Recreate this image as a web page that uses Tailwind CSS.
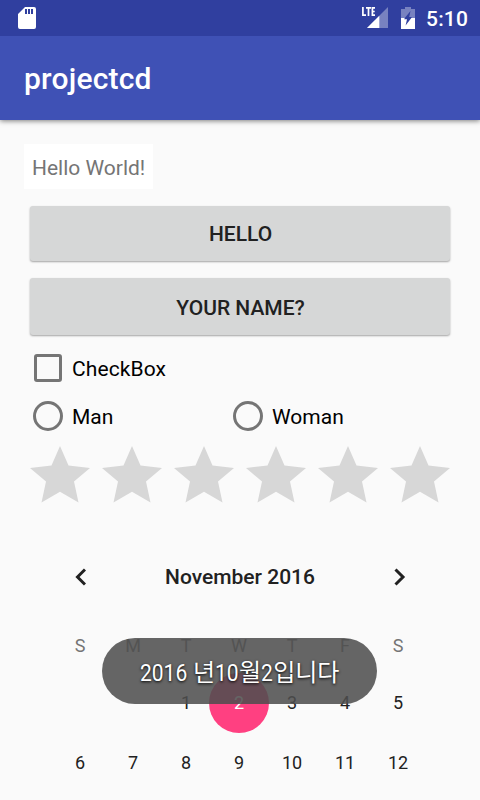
<!DOCTYPE html>
<html lang="ko">
<head>
<meta charset="utf-8">
<title>projectcd</title>
<script src="https://cdn.jsdelivr.net/npm/@tailwindcss/browser@4"></script>
</head>
<body class="relative flex h-[800px] w-[480px] flex-col overflow-hidden bg-[#fafafa] font-['Roboto','Noto_Sans_CJK_KR',sans-serif] text-[21px] text-black">
  <header class="h-[120px] shrink-0 bg-[#3f51b5] text-white shadow-[0_1px_5px_rgba(0,0,0,0.5)]">
    <div class="flex h-9 items-center bg-[#303f9f] pl-[18px] pr-3">
      <svg class="h-[22px] w-[18px]" viewBox="0 0 18 22"><path fill="#fff" fill-rule="evenodd" d="M7 0H16Q18 0 18 2V20Q18 22 16 22H2Q0 22 0 20V7ZM7 2V7H9V2ZM10 2V7H12V2ZM13 2V7H15V2Z"/></svg>
      <svg class="ml-auto h-[22px] w-[27px]" viewBox="0 0 27 22">
        <path fill="#fff" fill-opacity=".35" d="M26 0V21H5Z"/>
        <path fill="#fff" d="M17.300 8.700V21H5Z"/>
        <path fill="none" stroke="#fff" stroke-width="1.700" d="M.9 0V8.200H4M4 .9H9M6.500 .9V9M13 .9H10.400V8.200H13M10.400 4.500H12.700"/>
      </svg>
      <svg class="ml-3 h-[22px] w-[14px]" viewBox="0 0 14 22">
        <path fill="#fff" fill-opacity=".35" fill-rule="evenodd" d="M4 0H10V2H14V11H10.300L10.800 10H8.200L9.500 4L3.800 11H0V2H4Z"/>
        <path fill="#fff" fill-rule="evenodd" d="M0 11H14V22H0ZM3.800 11L3.200 12.300H6L4.600 18.500L10.300 11Z"/>
      </svg>
      <span class="ml-[11px] w-[42px] whitespace-nowrap pt-0.5 text-[21px] font-medium leading-[34px] tracking-[0.2px]">5:10</span>
    </div>
    <h1 class="pl-6 pt-px text-[30px] font-medium leading-[84px] tracking-[0.2px]">projectcd</h1>
  </header>
  <main class="flex flex-col px-6 pt-6">
    <p class="h-[45px] w-[129px] whitespace-nowrap bg-white pl-2 leading-[49px] text-[#757575]">Hello World!</p>
    <button class="ml-1.5 mr-1.5 mt-[17px] h-[55px] rounded-[3px] bg-[#d6d7d7] pl-px pt-0.5 font-medium text-[#212121] shadow-[0_1px_2px_rgba(0,0,0,0.35)]">HELLO</button>
    <button class="ml-1.5 mr-1.5 mt-[17px] h-[57px] rounded-[3px] bg-[#d6d7d7] pl-px pt-1 font-medium text-[#212121] shadow-[0_1px_2px_rgba(0,0,0,0.35)]">YOUR NAME?</button>
    <div class="mt-[9px] flex h-12 items-center">
      <span class="ml-[10px] h-7 w-7 rounded-[3px] border-3 border-[#757575]"></span>
      <span class="ml-[10px] pt-1 tracking-[0.1px]">CheckBox</span>
    </div>
    <div class="flex h-12">
      <div class="flex w-[200px] items-center"><span class="ml-[9px] h-[30px] w-[30px] rounded-full border-3 border-[#757575]"></span><span class="ml-[9px] pt-1">Man</span></div>
      <div class="flex items-center"><span class="ml-[9px] h-[30px] w-[30px] rounded-full border-3 border-[#757575]"></span><span class="ml-[9px] pt-1">Woman</span></div>
    </div>
    <div class="flex h-[72px] text-[#d7d7d7]">
      <svg class="h-[72px] w-[72px]" viewBox="0 0 72 72"><path id="star" fill="currentColor" d="M36 6L44.500 25.500L66 28L50 41.500L54.500 62.500L36 51.700L17.500 62.500L22 41.500L6 28L27.500 25.500Z"/></svg>
      <svg class="h-[72px] w-[72px]" viewBox="0 0 72 72"><use href="#star"/></svg>
      <svg class="h-[72px] w-[72px]" viewBox="0 0 72 72"><use href="#star"/></svg>
      <svg class="h-[72px] w-[72px]" viewBox="0 0 72 72"><use href="#star"/></svg>
      <svg class="h-[72px] w-[72px]" viewBox="0 0 72 72"><use href="#star"/></svg>
      <svg class="h-[72px] w-[72px]" viewBox="0 0 72 72"><use href="#star"/></svg>
    </div>
  </main>
  <section class="ml-[53.5px] w-[371px] text-[18px] text-[#212121]">
    <div class="mt-[33px] flex h-16 items-center justify-between pl-[20.500px] pr-[18.500px]">
      <svg class="h-[18px] w-3" viewBox="0 0 12 18"><path fill="none" stroke="currentColor" stroke-width="3" d="M11 1.500L3.500 9L11 16.500"/></svg>
      <span class="pt-px text-[21px] font-medium">November 2016</span>
      <svg class="h-[18px] w-3" viewBox="0 0 12 18"><path fill="none" stroke="currentColor" stroke-width="3" d="M1.500 1.500L9 9L1.500 16.500"/></svg>
    </div>
    <div class="mt-[22px] grid h-[30px] grid-cols-7 text-center leading-[30px] text-[#757575]">
      <span>S</span><span>M</span><span>T</span><span>W</span><span>T</span><span>F</span><span>S</span>
    </div>
    <div class="mt-[12px] grid grid-cols-7 text-center leading-[60px]">
      <span></span><span></span><span>1</span><span class="-mx-[3.5px] h-[60px] rounded-full bg-[#ff4081] text-white">2</span><span>3</span><span>4</span><span>5</span>
      <span>6</span><span>7</span><span>8</span><span>9</span><span>10</span><span>11</span><span>12</span>
    </div>
  </section>
  <div class="absolute left-[102px] top-[638px] flex h-[66px] w-[275px] items-center rounded-full bg-[#4e4e4e]/87 pl-[38px]">
    <p class="flex items-baseline whitespace-pre pt-[3px] text-[24px] leading-none text-white [text-shadow:0_1px_3px_#000]"><span class="w-[53px] origin-left scale-x-[0.875]">2016 </span><span>년</span><span class="w-[24px] origin-left scale-x-[0.875]">10</span><span>월</span><span class="w-[12px] origin-left scale-x-[0.875]">2</span><span>입니다</span></p>
  </div>
</body>
</html>
